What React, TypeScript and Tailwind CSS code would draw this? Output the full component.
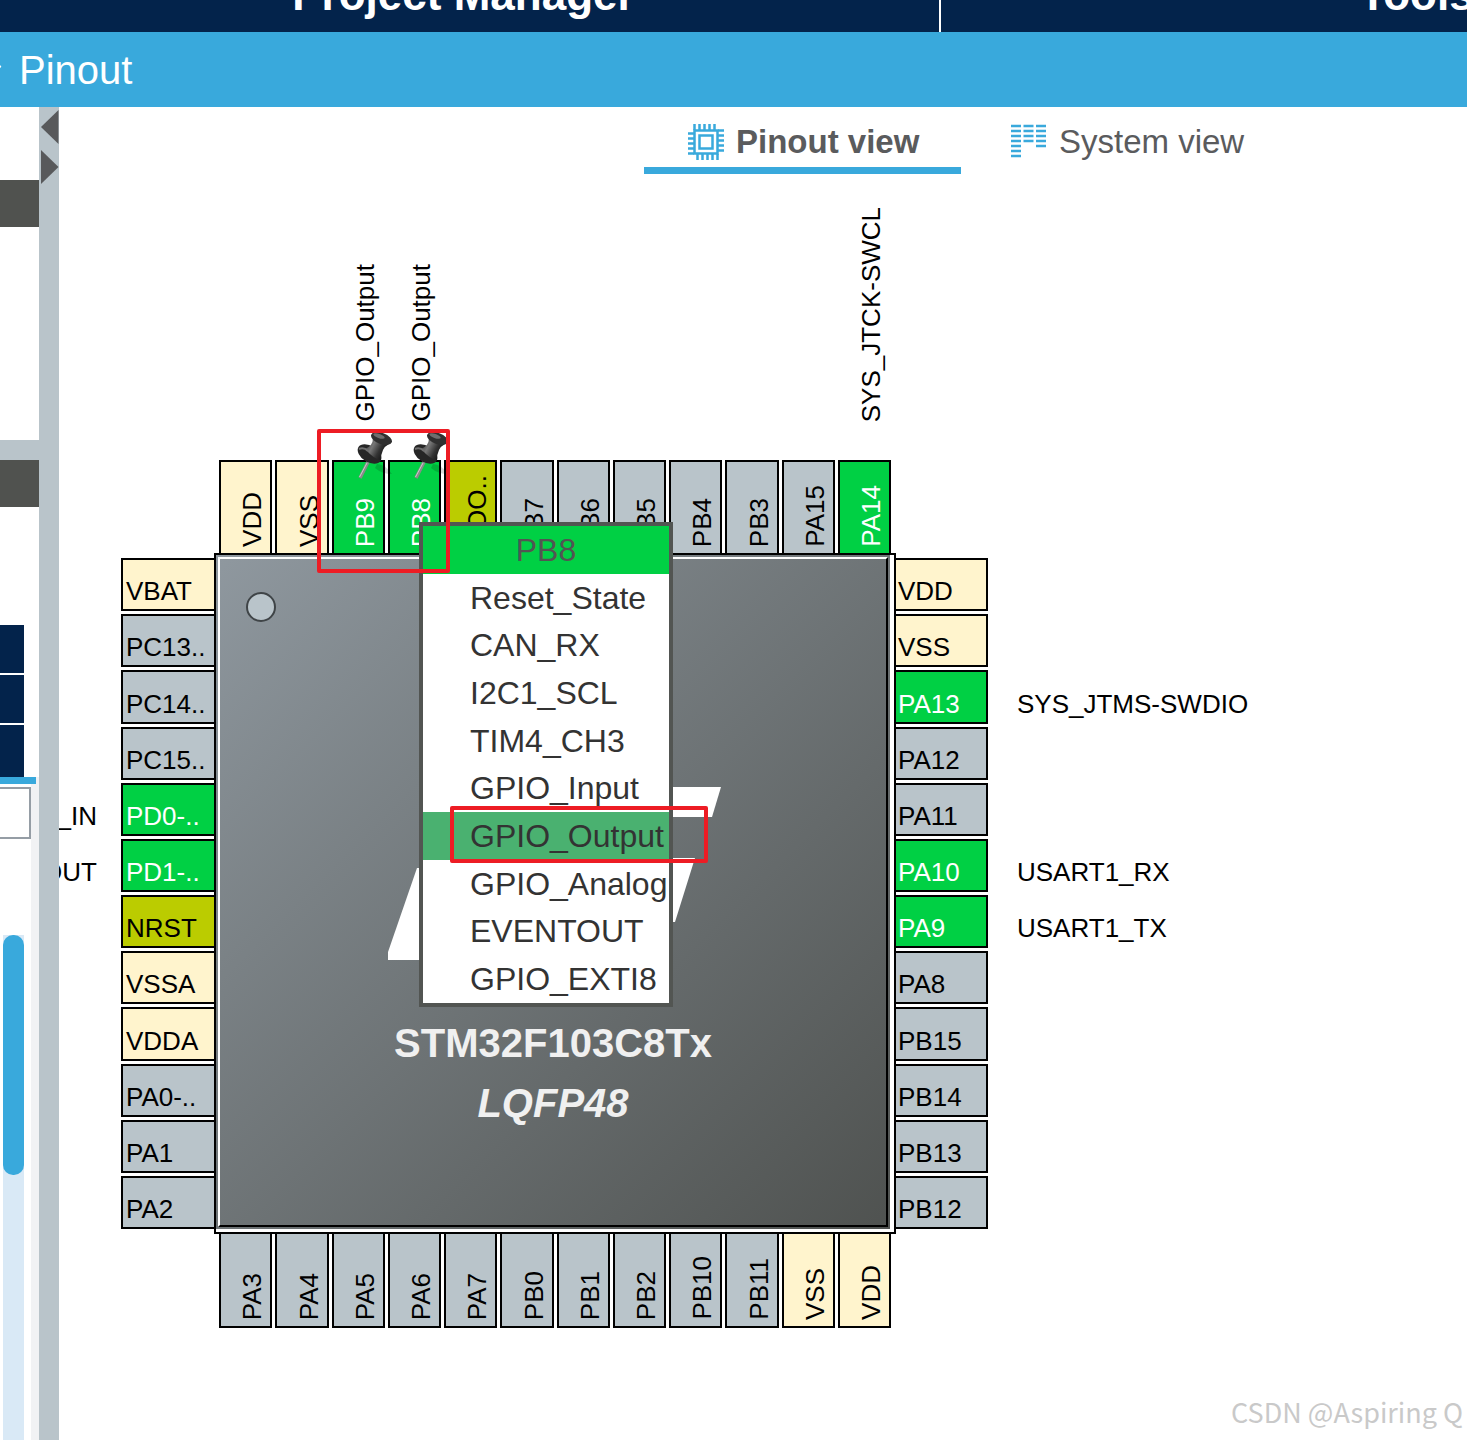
import { ChevronDown } from "lucide-react";
import React, { useState } from "react";

type Pin = {
  name: string;
  kind?: "power" | "active" | "special";
  signal?: string;
};

const topPins: Pin[] = [
  { name: "VDD", kind: "power" },
  { name: "VSS", kind: "power" },
  { name: "PB9", kind: "active", signal: "GPIO_Output" },
  { name: "PB8", kind: "active", signal: "GPIO_Output" },
  { name: "BOO..", kind: "special" },
  { name: "PB7" },
  { name: "PB6" },
  { name: "PB5" },
  { name: "PB4" },
  { name: "PB3" },
  { name: "PA15" },
  { name: "PA14", kind: "active", signal: "SYS_JTCK-SWCL" },
];

const leftPins: Pin[] = [
  { name: "VBAT", kind: "power" },
  { name: "PC13.." },
  { name: "PC14.." },
  { name: "PC15.." },
  { name: "PD0-..", kind: "active", signal: "_IN" },
  { name: "PD1-..", kind: "active", signal: "OUT" },
  { name: "NRST", kind: "special" },
  { name: "VSSA", kind: "power" },
  { name: "VDDA", kind: "power" },
  { name: "PA0-.." },
  { name: "PA1" },
  { name: "PA2" },
];

const rightPins: Pin[] = [
  { name: "VDD", kind: "power" },
  { name: "VSS", kind: "power" },
  { name: "PA13", kind: "active", signal: "SYS_JTMS-SWDIO" },
  { name: "PA12" },
  { name: "PA11" },
  { name: "PA10", kind: "active", signal: "USART1_RX" },
  { name: "PA9", kind: "active", signal: "USART1_TX" },
  { name: "PA8" },
  { name: "PB15" },
  { name: "PB14" },
  { name: "PB13" },
  { name: "PB12" },
];

const bottomPins: Pin[] = [
  { name: "PA3" },
  { name: "PA4" },
  { name: "PA5" },
  { name: "PA6" },
  { name: "PA7" },
  { name: "PB0" },
  { name: "PB1" },
  { name: "PB2" },
  { name: "PB10" },
  { name: "PB11" },
  { name: "VSS", kind: "power" },
  { name: "VDD", kind: "power" },
];

const menuItems = [
  "Reset_State",
  "CAN_RX",
  "I2C1_SCL",
  "TIM4_CH3",
  "GPIO_Input",
  "GPIO_Output",
  "GPIO_Analog",
  "EVENTOUT",
  "GPIO_EXTI8",
];

const pinColor = (pin: Pin) => {
  if (pin.kind === "power") return "bg-[#fff4cd] text-black";
  if (pin.kind === "active") return "bg-[#00d044] text-white";
  if (pin.kind === "special") return "bg-[#bbcc00] text-black";
  return "bg-[#b9c4ca] text-black";
};

function App() {
  const [selected, setSelected] = useState("GPIO_Output");

  return (
    <div className="relative flex min-h-screen flex-col overflow-hidden bg-white font-['Liberation_Sans',Arial,sans-serif]">
      <header className="flex h-8 items-stretch overflow-hidden bg-[#03234b] text-[44px] leading-[44px] font-bold text-white">
        <button className="flex w-[64%] shrink-0 items-end justify-center pr-3 pb-[15px]">
          Project Manager
        </button>
        <button className="flex w-[65%] shrink-0 items-end justify-center border-l-2 border-white pb-[15px]">
          Tools
        </button>
      </header>

      <div className="flex h-[75px] items-center bg-[#39a9dc] text-[40px] text-white">
        <ChevronDown className="-ml-[21px] size-7 shrink-0" />
        <button className="ml-3">Pinout</button>
      </div>

      <div className="flex flex-1">
        <Sidebar />
        <Splitter />
        <main className="min-w-0 flex-1 overflow-hidden">
          <nav className="flex h-[67px] pl-[585px] text-[33px] text-[#5a5b5d]">
            <button className="flex w-[317px] shrink-0 items-center gap-3 border-b-7 border-[#39a9dc] pt-[10px] pl-11 font-bold whitespace-nowrap">
              <ChipIcon />
              Pinout view
            </button>
            <button className="flex shrink-0 items-center gap-3 border-b-7 border-transparent pt-[10px] pl-[50px] whitespace-nowrap">
              <SystemIcon />
              System view
            </button>
          </nav>

          <div className="grid grid-cols-[62px_93px_682px_92px_1fr] text-[26px] leading-7 whitespace-nowrap">
            <div className="col-start-3 flex h-[379px] items-end gap-[3px] px-[5px]">
              {topPins.map((pin) => (
                <div key={pin.name} className="flex flex-1 flex-col">
                  {pin.signal && (
                    <span className="mb-[38px] self-end pr-[6px] [writing-mode:vertical-rl]">
                      <span className="block rotate-180">{pin.signal}</span>
                    </span>
                  )}
                  <button
                    className={`flex h-[93px] items-end justify-end border-2 border-b-0 border-black pr-1 pb-[6px] ${pinColor(pin)}`}
                  >
                    <span className="rotate-180 [writing-mode:vertical-rl]">{pin.name}</span>
                  </button>
                </div>
              ))}
            </div>

            <div className="col-start-1 flex flex-col gap-[3px] py-[5px] pr-6">
              {leftPins.map((pin) => (
                <div key={pin.name} className="flex flex-1 items-end justify-end pb-[6px]">
                  {pin.signal}
                </div>
              ))}
            </div>
            <div className="flex flex-col gap-[3px] py-[5px]">
              {leftPins.map((pin) => (
                <button
                  key={pin.name}
                  className={`flex flex-1 items-end border-2 border-r-0 border-black pb-1 pl-[3px] ${pinColor(pin)}`}
                >
                  {pin.name}
                </button>
              ))}
            </div>

            <div className="relative h-[681px]">
              <ChipBody />
              <PinMenu selected={selected} onSelect={setSelected} />
              <PushPin className="absolute -top-[123px] left-[141px]" />
              <PushPin className="absolute -top-[123px] left-[197px]" />
              <div className="pointer-events-none absolute -top-[124px] left-[103px] h-[144px] w-[133px] rounded-xs border-4 border-[#ed1c24]" />
              <div className="pointer-events-none absolute top-[253px] left-[236px] h-[57px] w-[258px] rounded-xs border-4 border-[#ed1c24]" />
            </div>

            <div className="flex flex-col gap-[3px] py-[5px]">
              {rightPins.map((pin) => (
                <button
                  key={pin.name}
                  className={`flex flex-1 items-end border-2 border-l-0 border-black pb-1 pl-[2px] ${pinColor(pin)}`}
                >
                  {pin.name}
                </button>
              ))}
            </div>
            <div className="flex flex-col gap-[3px] py-[5px] pl-[29px]">
              {rightPins.map((pin) => (
                <div key={pin.name} className="flex flex-1 items-end pb-[6px]">
                  {pin.signal}
                </div>
              ))}
            </div>

            <div className="col-start-3 flex h-[94px] gap-[3px] px-[5px]">
              {bottomPins.map((pin) => (
                <button
                  key={pin.name}
                  className={`flex flex-1 items-end justify-end border-2 border-t-0 border-black pr-1 pb-[6px] ${pinColor(pin)}`}
                >
                  <span className="rotate-180 [writing-mode:vertical-rl]">{pin.name}</span>
                </button>
              ))}
            </div>
          </div>
        </main>
      </div>

      <div className="absolute right-1 bottom-2 font-['Noto_Sans_CJK_SC',sans-serif] text-[27px] text-[#c9c9c9]">
        CSDN @Aspiring Q
      </div>
    </div>
  );
}

export default App;

const Sidebar = () => {
  return (
    <aside className="flex w-[39px] shrink-0 flex-col overflow-hidden">
      <div className="h-[73px]" />
      <div className="h-[47px] bg-[#50524f]" />
      <div className="h-[213px]" />
      <div className="h-5 bg-[#b9c4ca]" />
      <div className="h-[47px] bg-[#50524f]" />
      <div className="h-[118px]" />
      <div className="flex w-6 flex-col gap-[2px]">
        <div className="h-12 bg-[#03234b]" />
        <div className="h-12 bg-[#03234b]" />
        <div className="h-[52px] bg-[#03234b]" />
      </div>
      <div className="flex flex-1 flex-col bg-linear-to-r from-white from-80% to-[#f1f2f4] to-80%">
        <div className="h-[7px] w-9 bg-[#39a9dc]" />
        <input
          aria-label="Search"
          className="mt-[3px] h-[52px] w-[31px] border-2 border-l-0 border-[#959da5] bg-white outline-none"
        />
        <div className="mt-24 ml-[3px] w-[21px] flex-1 bg-[#d9e9f6]">
          <div className="h-[240px] rounded-[10px] bg-[#39a9dc]" />
        </div>
      </div>
    </aside>
  );
};

const Splitter = () => {
  return (
    <div className="w-5 shrink-0 bg-[#b9c4ca]">
      <svg width="20" height="80" viewBox="0 0 20 80" fill="#58595b">
        <path d="M19.500 3v34L2 20z" />
        <path d="M2 43v34L19.500 60z" />
      </svg>
    </div>
  );
};

const ChipBody = () => {
  return (
    <div className="h-full border-2 border-black bg-white pr-1 pb-[3px]">
      <div className="h-full bg-linear-to-br from-[#8f989f] to-[#4f5250] p-[2px]">
        <div className="relative flex h-full flex-col items-center border-2 border-t-white border-r-black border-b-black border-l-white pt-[454px] text-[40px] leading-[60px] text-[#f0f0f0]">
          <svg
            className="absolute top-0 left-0"
            width="666"
            height="666"
            viewBox="220 559 666 666"
          >
            <circle cx="261" cy="607" r="14" fill="#b9c4ca" stroke="#3f4447" strokeWidth="2" />
            <path d="M417 868h10v92h-39v-8z" fill="#fff" />
            <path d="M660 787h61l-9 30h-52z" fill="#fff" />
            <path d="M660 858h35l-20 64h-15z" fill="#fff" />
          </svg>
          <p className="font-bold">STM32F103C8Tx</p>
          <p className="font-bold italic">LQFP48</p>
        </div>
      </div>
    </div>
  );
};

const PinMenu = ({
  selected,
  onSelect,
}: {
  selected: string;
  onSelect: (item: string) => void;
}) => {
  return (
    <div
      role="menu"
      className="absolute -top-[31px] left-[205px] flex h-[485px] w-[254px] flex-col border-4 border-[#525552] bg-white text-[32px] text-[#333]"
    >
      <div className="flex flex-1 items-center justify-center bg-[#00d044] text-[#525552]">PB8</div>
      {menuItems.map((item) => (
        <button
          key={item}
          role="menuitem"
          onClick={() => onSelect(item)}
          className={`flex flex-1 items-center pl-[47px] ${item === selected ? "bg-[#4ab170]" : ""}`}
        >
          {item}
        </button>
      ))}
    </div>
  );
};

const PushPin = ({ className }: { className: string }) => {
  return (
    <svg className={className} width="40" height="50" viewBox="0 0 40 50">
      <defs>
        <linearGradient id="pin-body" x1="0" y1="0" x2="1" y2="0.500">
          <stop offset="0" stopColor="#2b2b2b" />
          <stop offset="0.400" stopColor="#777" />
          <stop offset="0.700" stopColor="#333" />
          <stop offset="1" stopColor="#111" />
        </linearGradient>
      </defs>
      <path d="M22 34q8 0 15 10q-10 0-17-6z" fill="#000" opacity="0.150" />
      <path d="M13 32L5 48" stroke="#8a8a8a" strokeWidth="3.500" />
      <path d="M12 33L4.500 47" stroke="#ccc" strokeWidth="1" />
      <ellipse cx="14.500" cy="24" rx="13" ry="8" transform="rotate(32 14.500 24)" fill="#262626" />
      <path d="M18 8L34 14Q26 18 26 30Q20 30 10 19Q18 16 18 8z" fill="url(#pin-body)" />
      <ellipse cx="26.500" cy="8.500" rx="11" ry="5.500" transform="rotate(20 26.500 8.500)" fill="#303030" />
      <ellipse cx="24" cy="6" rx="6" ry="2" transform="rotate(20 24 6)" fill="#6e6e6e" />
      <path d="M4 19q5-2 9 2" stroke="#707070" strokeWidth="2" fill="none" />
    </svg>
  );
};

const ChipIcon = () => {
  return (
    <svg
      className="shrink-0"
      width="36"
      height="36"
      viewBox="0 0 36 36"
      fill="none"
      stroke="#39a9dc"
      strokeWidth="2.500"
    >
      <path d="M6.500 6.500h23v23h-23z" />
      <path d="M11.500 11.500h13v13h-13z" />
      <path d="M6.500 0v6M11.500 0v6M16.500 0v6M21.500 0v6M26.500 0v6" />
      <path d="M9.500 30v6M14.500 30v6M19.500 30v6M24.500 30v6M29.500 30v6" />
      <path d="M0 9.500h6M0 14.500h6M0 19.500h6M0 24.500h6M0 29.500h6" />
      <path d="M30 6.500h6M30 11.500h6M30 16.500h6M30 21.500h6M30 26.500h6" />
    </svg>
  );
};

const SystemIcon = () => {
  return (
    <svg
      className="shrink-0"
      width="36"
      height="36"
      viewBox="0 0 36 36"
      fill="none"
      stroke="#39a9dc"
      strokeWidth="2.500"
    >
      <path d="M0 2h10M0 7h10M0 12h10M0 17h10M0 22h10M0 27h10M0 32h10" />
      <path d="M12.500 2h10M12.500 7h10M12.500 12h10M12.500 17h10" />
      <path d="M25 2h10M25 7h10M25 12h10M25 17h10M25 22h10" />
    </svg>
  );
};
